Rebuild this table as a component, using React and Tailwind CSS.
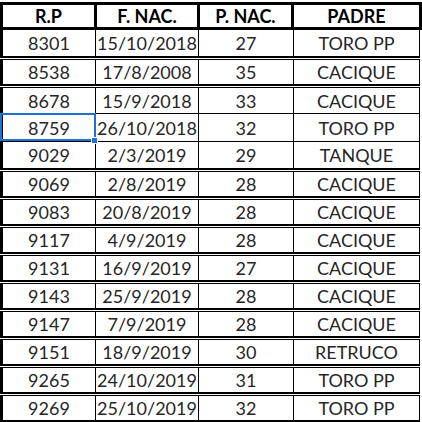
const ROWS = [
  ["8301", "15/10/2018", "27", "TORO PP"],
  ["8538", "17/8/2008", "35", "CACIQUE"],
  ["8678", "15/9/2018", "33", "CACIQUE"],
  ["8759", "26/10/2018", "32", "TORO PP"],
  ["9029", "2/3/2019", "29", "TANQUE"],
  ["9069", "2/8/2019", "28", "CACIQUE"],
  ["9083", "20/8/2019", "28", "CACIQUE"],
  ["9117", "4/9/2019", "28", "CACIQUE"],
  ["9131", "16/9/2019", "27", "CACIQUE"],
  ["9143", "25/9/2019", "28", "CACIQUE"],
  ["9147", "7/9/2019", "28", "CACIQUE"],
  ["9151", "18/9/2019", "30", "RETRUCO"],
  ["9265", "24/10/2019", "31", "TORO PP"],
  ["9269", "25/10/2019", "32", "TORO PP"],
];

// boundaries drawn as a single thin line instead of the double one
const SINGLE_AFTER = [2, 3];

export default function App() {
  return (
    <div
      className="relative w-[422px] h-[422px] bg-white overflow-hidden pt-[2px] text-[18px] leading-none"
      style={{ fontFamily: "Lato, 'Open Sans', sans-serif" }}
    >
      {/* header */}
      <div className="flex w-[422px] h-[28px] border-[3px] border-black font-bold text-black">
        <div className="w-[94px] border-r-[3px] border-black flex items-center justify-center">R.P</div>
        <div className="w-[103px] border-r-[3px] border-black flex items-center justify-center">F. NAC.</div>
        <div className="w-[94px] border-r-[3px] border-black flex items-center justify-center">P. NAC.</div>
        <div className="w-[125px] flex items-center justify-center">PADRE</div>
      </div>

      {ROWS.map((r, i) => {
        const gapBefore = i > 0 && !SINGLE_AFTER.includes(i - 1);
        const singleAfter = SINGLE_AFTER.includes(i);
        return (
          <div
            key={r[0]}
            className={
              "flex w-[420px] border-l-[3px] border-r border-black text-[#262626] " +
              (gapBefore ? "mt-px border-t h-[27px] " : "h-[28px] ") +
              (singleAfter ? "border-b" : "border-b-2")
            }
          >
            <div className="w-[93px] border-r border-black flex items-center justify-center">{r[0]}</div>
            <div className="w-[103px] border-r border-black flex items-center justify-center">{r[1]}</div>
            <div className="w-[95px] border-r border-black flex items-center justify-center">{r[2]}</div>
            <div className="w-[125px] flex items-center justify-center">{r[3]}</div>
          </div>
        );
      })}

      {/* active cell selection */}
      <div className="absolute left-0 top-[113px] w-[96px] h-[28px] border-2 border-[#1f6fd9]" />
      <div className="absolute left-[91px] top-[137px] w-[7px] h-[7px] bg-[#1f6fd9] border border-white" />
    </div>
  );
}
